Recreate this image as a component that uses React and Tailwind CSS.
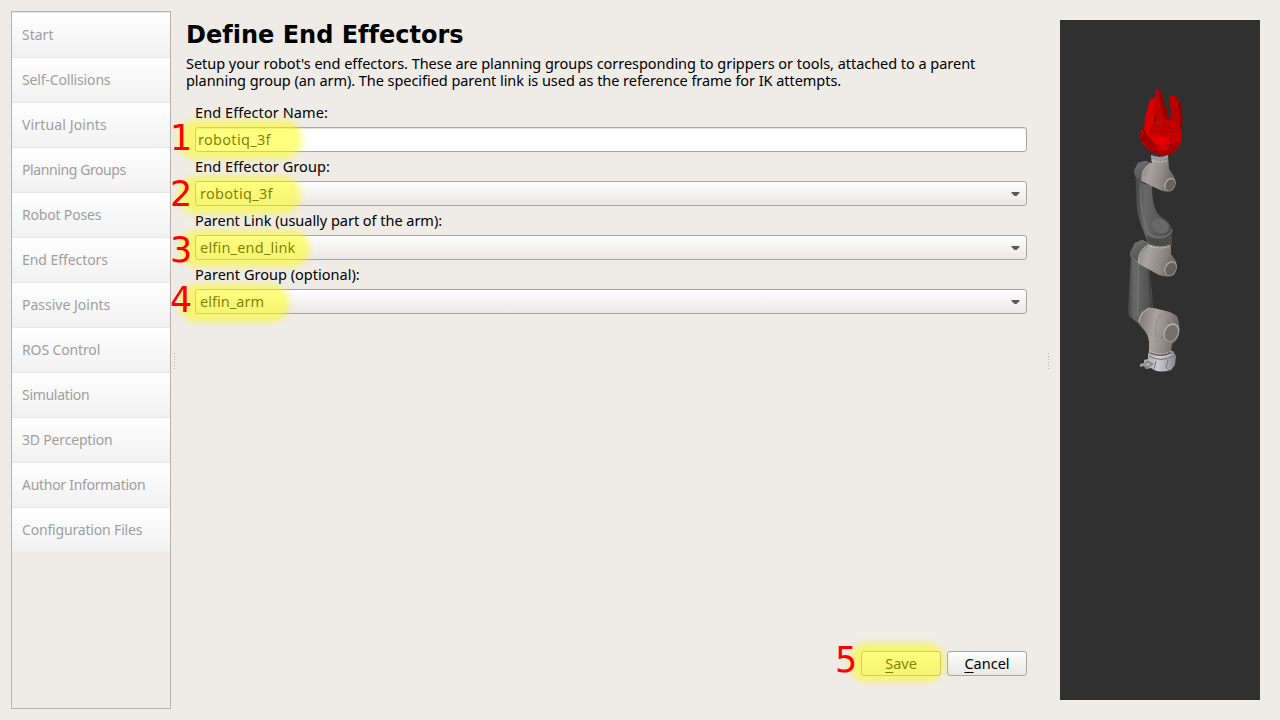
const NAV = [
  { label: 'Start', cls: '' },
  { label: 'Self-Collisions', cls: 'tracking-[-0.16px]' },
  { label: 'Virtual Joints', cls: 'tracking-[0.14px]' },
  { label: 'Planning Groups', cls: 'tracking-[-0.4px]' },
  { label: 'Robot Poses', cls: 'tracking-[-0.18px]' },
  { label: 'End Effectors', cls: 'tracking-[-0.06px]' },
  { label: 'Passive Joints', cls: '' },
  { label: 'ROS Control', cls: 'tracking-[-0.13px]' },
  { label: 'Simulation', cls: 'tracking-[-0.3px]' },
  { label: '3D Perception', cls: 'tracking-[-0.18px]' },
  { label: 'Author Information', cls: 'tracking-[-0.28px]' },
  { label: 'Configuration Files', cls: 'tracking-[-0.17px]' },
];

const FIELDS = [
  { n: '1', label: 'End Effector Name:', labelTrack: 'tracking-[0.08px]', value: 'robotiq_3f', track: 'tracking-[0.3px]', mark: 'left-[-18px] top-[-8px] w-[124px] h-[39px]', num: 'top-[-11px]' },
  { n: '2', label: 'End Effector Group:', labelTrack: 'tracking-[0.08px]', value: 'robotiq_3f', track: 'tracking-[0.3px]', select: true, mark: 'left-[-18px] top-[-6px] w-[123px] h-[38px]', num: 'top-[-9px]' },
  { n: '3', label: 'Parent Link (usually part of the arm):', labelTrack: 'tracking-[-0.03px]', value: 'elfin_end_link', track: 'tracking-[0.2px]', select: true, mark: 'left-[-17px] top-[-6px] w-[131px] h-[37px]', num: 'top-[-7px]' },
  { n: '4', label: 'Parent Group (optional):', labelTrack: 'tracking-[0.02px]', value: 'elfin_arm', track: 'tracking-[0.05px]', select: true, mark: 'left-[-17px] top-[-6px] w-[110px] h-[38px]', num: 'top-[-11px]' },
];

function Highlight({ className }) {
  return <span className={`pointer-events-none absolute rounded-[18px] bg-[#ffff00]/50 blur-[3px] ${className}`} />;
}

function StepNumber({ children, className }) {
  return (
    <span className={`pointer-events-none absolute font-['DejaVu_Sans',sans-serif] text-[35px] leading-[43px] text-[#ff0000] ${className}`}>
      {children}
    </span>
  );
}

function Grip({ className }) {
  return (
    <svg className={className} width="3" height="18" viewBox="0 0 3 18" shapeRendering="crispEdges">
      {[0, 3, 6, 9, 12, 15].map((y) => (
        <rect key={y} x="1" y={y} width="1" height="1" fill="#b5b2ae" />
      ))}
    </svg>
  );
}

function Field({ field }) {
  return (
    <div className="flex h-[54px] flex-col">
      <label className={`h-[27px] text-[14.5px] leading-[25px] whitespace-nowrap ${field.labelTrack}`}>{field.label}</label>
      <div
        className={`relative flex h-[25px] items-center justify-between rounded-[3px] border border-[#a9a6a2] pr-[6px] ${
          field.select ? 'bg-gradient-to-b from-[#fefefe] to-[#eae8e6] pl-1' : 'bg-white pl-[2px] shadow-[inset_0_1px_0_#e4e2e0]'
        }`}
      >
        <span className={`text-[14.5px] leading-[21px] ${field.track}`}>{field.value}</span>
        {field.select && (
          <svg className="mt-px" width="9" height="6" viewBox="0 0 9 6">
            <path d="M0.5 1H8.5V2L5.500 5H3.500L0.500 2Z" fill="#5c5b5a" />
          </svg>
        )}
        <Highlight className={field.mark} />
        <StepNumber className={`left-[-26px] ${field.num}`}>{field.n}</StepNumber>
      </div>
    </div>
  );
}

function Robot() {
  return (
    <svg width="100" height="300" viewBox="0 0 100 300">
      <defs>
        <linearGradient id="shell" x1="0" x2="1" y1="0" y2="0.2">
          <stop offset="0" stopColor="#75716e" />
          <stop offset="0.45" stopColor="#a8a39e" />
          <stop offset="0.75" stopColor="#8f8a86" />
          <stop offset="1" stopColor="#6e6a67" />
        </linearGradient>
        <linearGradient id="dark" x1="0" x2="1">
          <stop offset="0" stopColor="#454545" />
          <stop offset="0.25" stopColor="#686868" />
          <stop offset="1" stopColor="#4a4a4a" />
        </linearGradient>
        <linearGradient id="cap" x1="0" x2="0.6" y1="0" y2="1">
          <stop offset="0" stopColor="#747475" />
          <stop offset="1" stopColor="#4e4e4f" />
        </linearGradient>
        <linearGradient id="base" x1="0" x2="1">
          <stop offset="0" stopColor="#96969b" />
          <stop offset="0.5" stopColor="#c9c9cf" />
          <stop offset="1" stopColor="#88888e" />
        </linearGradient>
      </defs>

      {/* base */}
      <path d="M38 274L40 271H63L66 276L65 285L61 290Q51 293 44 290L41 288L36 289L34 286L30 287V284L34 283V280L38 279Z" fill="url(#base)" />
      <path d="M39 276Q51 283 64 276M46 281L44 289M58 280L56 287L59 290M37 281L43 284L36 288" stroke="#77777d" strokeWidth="1" fill="none" />
      <path d="M42 274Q51 279 61 274" stroke="#e0e0e5" strokeWidth="1" fill="none" />
      <ellipse cx="38" cy="284.500" rx="3" ry="2.500" fill="#aaaab0" stroke="#707075" strokeWidth="0.800" />

      {/* lower link */}
      <path d="M21 175L29 180L39 187L42 212L43 228L34 231L28 243L19 236L18 231Z" fill="url(#dark)" />
      <path d="M28.500 182L27.500 236" stroke="#7a7a7a" strokeWidth="1" />
      <path d="M39 187L41 228" stroke="#3f3f3f" strokeWidth="1.500" />

      {/* shoulder */}
      <path d="M28 240L31 232L38 228Q42 227 48 229L60 232L67 236Q70 243 69 252Q68 261 62 264L61 273Q51 279 39 273V262Q38 254 34 250L28 243Z" fill="url(#shell)" />
      <path d="M39 271Q51 277 61 271" stroke="#d0cbc5" strokeWidth="0.800" strokeDasharray="2 1.500" fill="none" />
      <path d="M40 273Q51 278 61 273" stroke="#4e4b49" strokeWidth="1" fill="none" />
      <path d="M46 257Q43 245 51 234" stroke="#918c87" strokeWidth="1" fill="none" />
      <path d="M29 242Q30 232 40 228" stroke="#bfbab4" strokeWidth="1" fill="none" />
      <ellipse cx="61.500" cy="252.500" rx="7.500" ry="9.500" transform="rotate(28 61.500 252.500)" fill="#b5b0aa" />
      <ellipse cx="61.500" cy="253" rx="6.300" ry="8.500" transform="rotate(28 61.500 253)" fill="#75716e" />
      <path d="M57 241L60 243M53 257L51 258" stroke="#6a6662" strokeWidth="1" />

      {/* upper link */}
      <path d="M25.500 96Q33 107 42 104Q42 114 43 121Q45 131 49 135Q53 139 58 142Q62 146 62 153V163Q56 168 48 167L38 163L35 155L30 142Q26 131 26 114Z" fill="url(#dark)" />
      <path d="M31 106Q29 130 38 153Q46 160 56 156Q62 153 62 149" stroke="#747474" strokeWidth="1.200" fill="none" />
      <ellipse cx="50" cy="146" rx="9.500" ry="7.500" transform="rotate(25 50 146)" fill="#686868" stroke="#555555" strokeWidth="0.900" strokeDasharray="2 0.700" />
      <path d="M37 155Q47 163 62 155V164Q50 169 38 163Z" fill="#4b4b4b" />

      {/* elbow */}
      <path d="M20.500 172L25 163L32 160L39 163V164Q50 168 61 164V174L66 181Q68 189 64 195Q59 198 49 195L29 184L20 176Z" fill="url(#shell)" />
      <path d="M20.500 172L25 163L32 160L39 163L37 167Q30 170 28 182L20 176Z" fill="url(#cap)" />
      <path d="M28.500 182Q28 170 38 165" stroke="#b9b4ae" strokeWidth="1" fill="none" />
      <path d="M40 164Q50 168 60 164" stroke="#504d4a" strokeWidth="1" fill="none" />
      <path d="M40 166Q50 170 60 166" stroke="#d5d0c9" strokeWidth="0.900" strokeDasharray="2 1.500" fill="none" />
      <path d="M58 180L62 183M53 193L55 194" stroke="#6a6662" strokeWidth="1" />
      <ellipse cx="60.500" cy="188.500" rx="6" ry="7.800" transform="rotate(28 60.500 188.500)" fill="#a5a09a" />
      <ellipse cx="60.800" cy="189" rx="4.900" ry="6.800" transform="rotate(28 60.800 189)" fill="#65615e" />

      {/* wrist */}
      <path d="M24.500 90L28 83L35 81L42 83L41 75Q50 79 58 75L59 89L64 96Q67 103 63 110Q58 113 50 110L31 101L25 96Z" fill="url(#shell)" />
      <path d="M24.500 90L28 83L35 81L41 83Q32 86 31.500 101L25 96Z" fill="url(#cap)" />
      <path d="M32 100Q31 88 40 84" stroke="#aaa59f" strokeWidth="1" fill="none" />
      <path d="M41 75Q50 79 58 75V78Q49 82 41 78Z" fill="#9999a4" />
      <path d="M41 80Q50 84 58 80" stroke="#d2cec8" strokeWidth="0.900" strokeDasharray="2 1.500" fill="none" />
      <ellipse cx="60" cy="104.500" rx="5.300" ry="7.100" transform="rotate(28 60 104.500)" fill="#aaa59f" />
      <ellipse cx="60.300" cy="105" rx="4.300" ry="6.100" transform="rotate(28 60.300 105)" fill="#65615f" />

      {/* gripper */}
      <path d="M45 10L48 9L52 14L53 23L57 29L59 42L50 48L45 35Z" fill="#b80000" />
      <path d="M49 10L52 14L53 23L57 29L59 42L56 43L51 28Z" fill="#960000" />
      <path d="M59 17L62 15L67 17L71 25Q73 37 72 48L66 55L60 43L61 31Z" fill="#bb0000" />
      <path d="M66 17L71 25Q73 37 72 48L70 50Q71 33 66 17Z" fill="#8b0000" />
      <path d="M40 19L46 18L47 24L45 41L52 39L59 40L69 46L72 52L71 62Q66 73 59 75L50 75Q38 73 31 61L29.500 53L34 47L35 38Z" fill="#c90000" />
      <path d="M40 19L46 18L47 24L44 42L39 55L35 52L35 38Z" fill="#d60000" />
      <path d="M46 23L44 43L41 51" stroke="#9b0000" strokeWidth="1.200" fill="none" />
      <path d="M46 44L52 40L59 41L67 46L71 54L62 57L42 54Z" fill="#c50000" />
      <path d="M45 47L54 46L62 49L68 48M44 51L65 52M56 42L60 46" stroke="#a40000" strokeWidth="1" fill="none" />
      <path d="M30 52L38 56L44 64L37 66L31 60Z" fill="#9a0000" />
      <path d="M39 56L57 57L60 64L51 65L44 63Z" fill="#e60000" />
      <path d="M57 57L71 53L71 60L61 64Z" fill="#c70000" />
      <path d="M36 64L44 63L51 66L61 64L70 61Q66 72 59 75L50 75Q40 73 35 66Z" fill="#a50000" />
      <path d="M45 64L51 66L60 65L57 70L49 71Z" fill="#d00000" />
      <path d="M33 49L36 56M43 73L48 70" stroke="#7a0000" strokeWidth="1.200" />
    </svg>
  );
}

export default function App() {
  return (
    <div className="flex h-[720px] w-[1280px] overflow-hidden bg-[#efebe7] font-['Noto_Sans',sans-serif] text-black">
      <nav className="mt-[11px] ml-[11px] h-[698px] w-[160px] shrink-0 border border-[#b6b3b0]">
        {NAV.map((item) => (
          <div
            key={item.label}
            className="flex h-[45px] items-center border-t border-[#e8e7e6] bg-gradient-to-b from-white to-[#f1f1f1] pl-[10px] text-[14px] leading-[20px] whitespace-nowrap text-[#a09f9e]"
          >
            <span className={item.cls}>{item.label}</span>
          </div>
        ))}
      </nav>
      <Grip className="mt-[353px] ml-[2px] shrink-0" />

      <main className="ml-[10px] flex w-[841px] shrink-0 flex-col pt-[21px]">
        <h1 className="h-[34px] font-['DejaVu_Sans',sans-serif] text-[24px] leading-[28px] font-bold tracking-[0.01px] whitespace-nowrap">
          Define End Effectors
        </h1>
        <div className="h-[46px] text-[14.5px] leading-[17px] whitespace-nowrap">
          <p className="h-[17px] tracking-[-0.036px]">
            Setup your robot's end effectors. These are planning groups corresponding to grippers or tools, attached to a parent
          </p>
          <p className="h-[17px] tracking-[-0.05px]">
            planning group (an arm). The specified parent link is used as the reference frame for IK attempts.
          </p>
        </div>
        <div className="-mt-px pl-[9px]">
          {FIELDS.map((f) => (
            <Field key={f.n} field={f} />
          ))}
        </div>
        <div className="mt-auto mb-[44px] flex justify-end gap-[6px]">
          <button className="relative h-[25px] w-[80px] rounded-[3px] border border-[#a9a6a2] bg-gradient-to-b from-[#fdfdfd] to-[#eae8e6] text-[14.5px] leading-[21px]">
            <span className="underline underline-offset-[3px]">S</span>ave
            <Highlight className="top-[-9px] left-[-13px] h-[39px] w-[96px]" />
            <StepNumber className="top-[-13px] left-[-27px]">5</StepNumber>
          </button>
          <button className="h-[25px] w-[80px] rounded-[3px] border border-[#a9a6a2] bg-gradient-to-b from-[#fdfdfd] to-[#eae8e6] text-[14.5px] leading-[21px]">
            <span className="underline underline-offset-[3px]">C</span>ancel
          </button>
        </div>
      </main>

      <Grip className="mt-[353px] ml-[20px] shrink-0" />
      <aside className="mt-[20px] ml-[10px] h-[680px] w-[200px] shrink-0 bg-[#303030] pt-[60px] pl-[50px]">
        <Robot />
      </aside>
    </div>
  );
}
